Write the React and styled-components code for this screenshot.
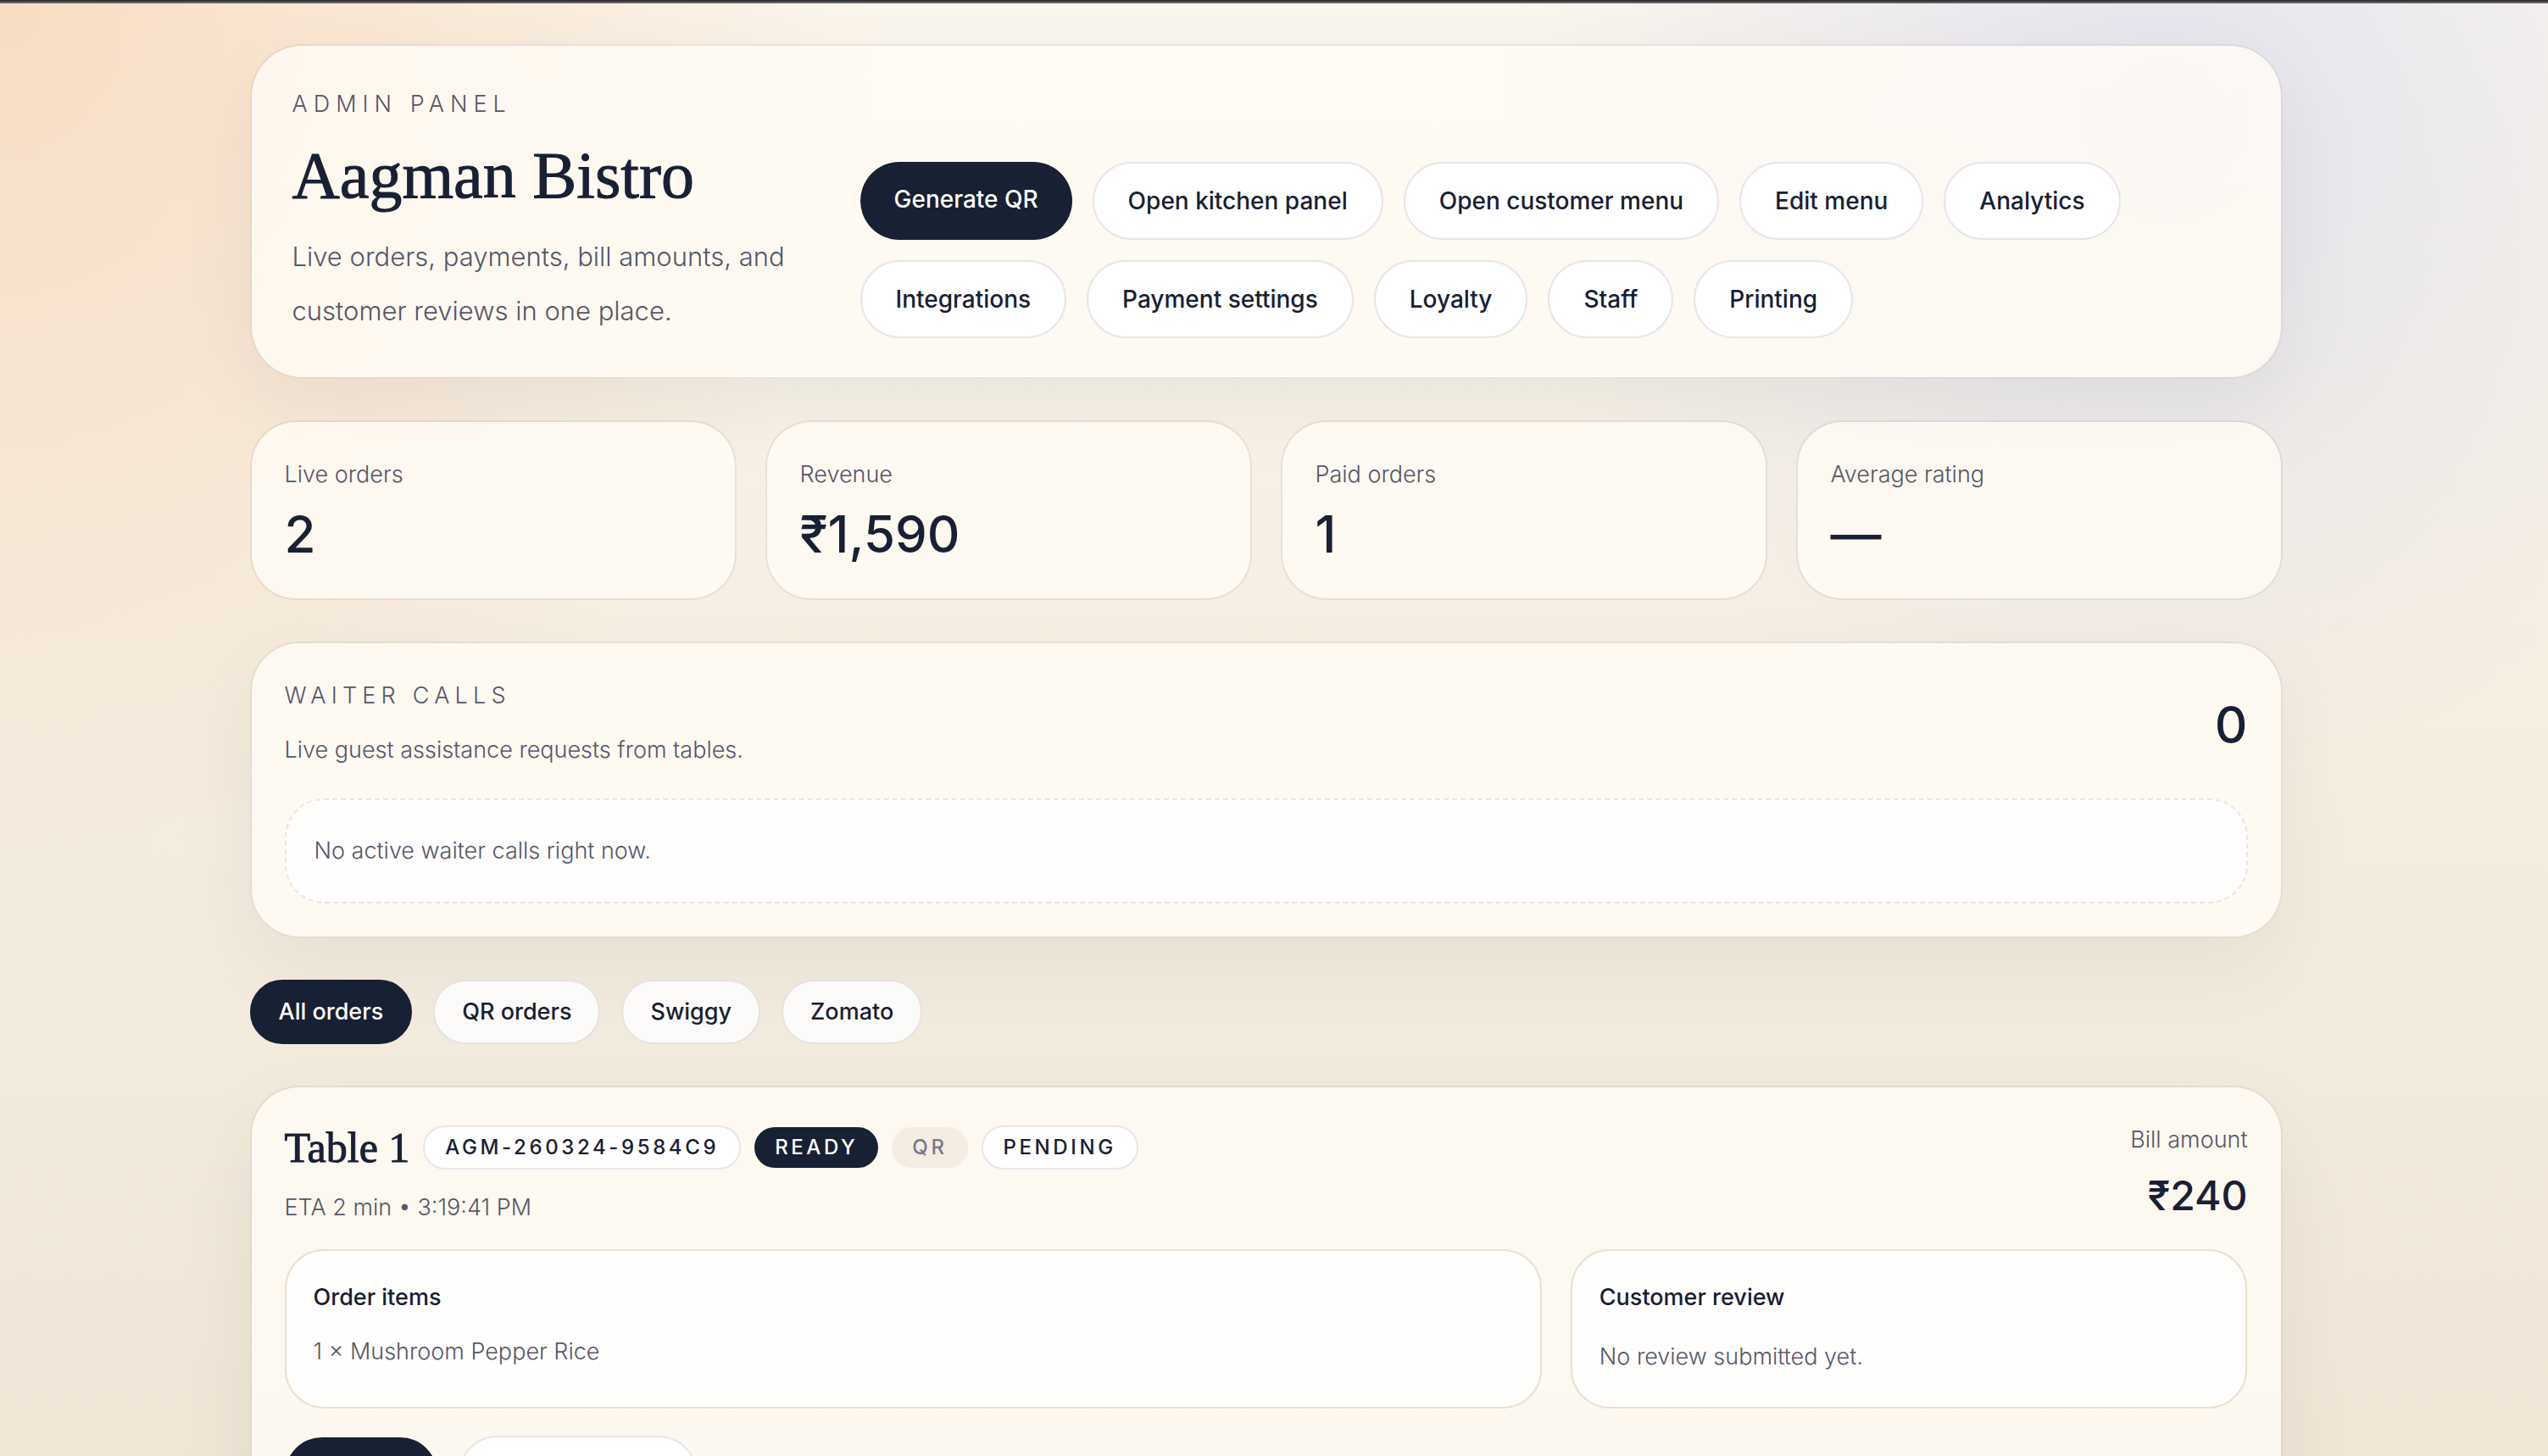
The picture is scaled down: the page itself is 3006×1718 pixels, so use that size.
import React, { useState } from "react";
import styled, { createGlobalStyle } from "styled-components";

const actions = [
  "Open kitchen panel",
  "Open customer menu",
  "Edit menu",
  "Analytics",
  "Integrations",
  "Payment settings",
  "Loyalty",
  "Staff",
  "Printing",
];

const stats = [
  { label: "Live orders", value: "2" },
  { label: "Revenue", value: "₹1,590" },
  { label: "Paid orders", value: "1" },
  { label: "Average rating", value: "—" },
];

const filters = ["All orders", "QR orders", "Swiggy", "Zomato"];

function App() {
  const [filter, setFilter] = useState("All orders");

  return (
    <Page>
      <GlobalStyle />
      <Content>
        <Hero>
          <div>
            <Eyebrow $wide>Admin panel</Eyebrow>
            <Title>Aagman Bistro</Title>
            <Lead>
              Live orders, payments, bill amounts, and customer reviews in one
              place.
            </Lead>
          </div>
          <Actions>
            <PrimaryAction href="#qr">Generate QR</PrimaryAction>
            {actions.map((name) => (
              <Action key={name} href="#panel">
                {name}
              </Action>
            ))}
          </Actions>
        </Hero>

        <Stats>
          {stats.map((stat) => (
            <StatCard key={stat.label}>
              <Muted>{stat.label}</Muted>
              <StatValue>{stat.value}</StatValue>
            </StatCard>
          ))}
        </Stats>

        <Panel>
          <PanelHeader>
            <div>
              <Eyebrow>Waiter calls</Eyebrow>
              <SubText>Live guest assistance requests from tables.</SubText>
            </div>
            <CallCount>0</CallCount>
          </PanelHeader>
          <EmptyBox>No active waiter calls right now.</EmptyBox>
        </Panel>

        <Filters>
          {filters.map((name) => (
            <FilterButton
              key={name}
              $active={name === filter}
              onClick={() => setFilter(name)}
            >
              {name}
            </FilterButton>
          ))}
        </Filters>

        <Panel>
          <OrderHeader>
            <div>
              <OrderTitleRow>
                <OrderTitle>Table 1</OrderTitle>
                <Badge>AGM-260324-9584C9</Badge>
                <Badge $tone="dark">Ready</Badge>
                <Badge $tone="soft">QR</Badge>
                <Badge>Pending</Badge>
              </OrderTitleRow>
              <OrderMeta>ETA 2 min • 3:19:41 PM</OrderMeta>
            </div>
            <Bill>
              <Muted>Bill amount</Muted>
              <BillValue>₹240</BillValue>
            </Bill>
          </OrderHeader>
          <OrderBody>
            <Box>
              <BoxTitle>Order items</BoxTitle>
              <Items>
                <li>1 × Mushroom Pepper Rice</li>
              </Items>
            </Box>
            <Box>
              <BoxTitle>Customer review</BoxTitle>
              <Review>No review submitted yet.</Review>
            </Box>
          </OrderBody>
          <OrderActions>
            <OrderButton $primary aria-label="Mark order served" />
            <OrderButton aria-label="Mark order paid" />
          </OrderActions>
        </Panel>
      </Content>
    </Page>
  );
}

export default App;

const GlobalStyle = createGlobalStyle`
  * {
    box-sizing: border-box;
  }

  body {
    margin: 0;
    font-family: Inter, "Liberation Sans", sans-serif;
    font-size: 27px;
    line-height: 46px;
    color: #182033;
  }

  h1, h2, h3, p, ul {
    margin: 0;
    padding: 0;
    font-weight: 400;
  }
`;

const Page = styled.div`
  height: 100vh;
  overflow: hidden auto;
  scrollbar-width: none;
  padding: 50px 19px 48px 0;
  border-top: 2px solid #353336;
  box-shadow: inset 0 2px #666467;
  background:
    radial-gradient(circle at 0% 0%, rgba(246, 196, 154, 0.5), transparent 30%),
    radial-gradient(circle at 85% 8%, rgba(200, 206, 240, 0.45), transparent 26%),
    linear-gradient(180deg, #fbf6ed 0%, #f5eee1 50%, #efe6d6 100%);
`;

const Content = styled.main`
  display: flex;
  flex-direction: column;
  gap: 49px;
  max-width: 2398px;
  margin: 0 auto;
`;

const Panel = styled.section`
  padding: 39px;
  border: 2px solid rgba(24, 32, 51, 0.07);
  border-radius: 58px;
  background: rgba(255, 250, 243, 0.86);
  background-clip: padding-box;
  box-shadow: 0 34px 96px rgba(24, 32, 51, 0.06);
`;

const Hero = styled(Panel)`
  display: grid;
  grid-template-columns: 622px 1fr;
  gap: 48px;
  align-items: end;
  padding: 46px 48px;
  border-radius: 62px;
`;

const Muted = styled.p`
  color: #555768;
  font-weight: 300;
`;

const Eyebrow = styled(Muted)`
  text-transform: uppercase;
  letter-spacing: ${({ $wide }) => ($wide ? "0.26em" : "0.23em")};
`;

const Title = styled.h1`
  margin: 15px 0 18px;
  font-family: "Liberation Serif", serif;
  font-size: 78px;
  line-height: 92px;
  -webkit-text-stroke: 1px #182033;
`;

const Lead = styled(Muted)`
  font-size: 31px;
  line-height: 64px;
`;

const Actions = styled.nav`
  display: flex;
  flex-wrap: wrap;
  gap: 24px;
`;

const Action = styled.a`
  padding: 21px 40px;
  border: 2px solid #e6e6ea;
  border-radius: 46px;
  background: #fff;
  color: #182033;
  font-size: 28px;
  font-weight: 500;
  text-decoration: none;
`;

const PrimaryAction = styled(Action)`
  border: none;
  background: #182033;
  color: #fff;
`;

const Stats = styled.section`
  display: grid;
  grid-template-columns: repeat(4, 1fr);
  gap: 34px;
`;

const StatCard = styled.div`
  padding: 39px;
  border: 2px solid rgba(24, 32, 51, 0.07);
  border-radius: 54px;
  background: rgba(255, 250, 243, 0.86);
  background-clip: padding-box;
`;

const StatValue = styled.p`
  margin-top: 10px;
  font-size: 60px;
  line-height: 74px;
  font-weight: 500;
`;

const PanelHeader = styled.header`
  display: flex;
  justify-content: space-between;
  align-items: center;
`;

const SubText = styled(Muted)`
  margin-top: 18px;
`;

const CallCount = styled.p`
  padding-top: 4px;
  font-size: 60px;
  line-height: 76px;
  font-weight: 500;
`;

const EmptyBox = styled(Muted)`
  && {
    margin-top: 34px;
  }
  padding: 37px 33px;
  border: 2px dashed #e6e6e4;
  border-radius: 46px;
  background: #fffefd;
`;

const Filters = styled.div`
  display: flex;
  gap: 25px;
`;

const FilterButton = styled.button`
  padding: 13px 32px;
  border: 2px solid ${({ $active }) => ($active ? "#182033" : "#e2e3e2")};
  border-radius: 38px;
  background: ${({ $active }) => ($active ? "#182033" : "#fdfbfa")};
  color: ${({ $active }) => ($active ? "#fff" : "#182033")};
  font: inherit;
  font-weight: 500;
  cursor: pointer;
`;

const OrderHeader = styled.header`
  display: flex;
  justify-content: space-between;
`;

const OrderTitleRow = styled.div`
  display: flex;
  align-items: center;
  gap: 16px;
`;

const OrderTitle = styled.h2`
  font-family: "Liberation Serif", serif;
  font-size: 50px;
  line-height: 64px;
  -webkit-text-stroke: 1px #182033;
`;

const Badge = styled.span`
  padding: 8px 24px;
  border: ${({ $tone }) => ($tone ? "none" : "2px solid #e6e6ea")};
  border-radius: 26px;
  background: ${({ $tone }) =>
    $tone === "dark" ? "#182033" : $tone === "soft" ? "#f4ede3" : "#fff"};
  color: ${({ $tone }) =>
    $tone === "dark" ? "#fff" : $tone === "soft" ? "#777987" : "#182033"};
  font-size: 24px;
  line-height: 32px;
  font-weight: 500;
  letter-spacing: 0.15em;
  text-transform: uppercase;
`;

const OrderMeta = styled(Muted)`
  margin-top: 16px;
`;

const Bill = styled.div`
  text-align: right;
`;

const BillValue = styled.p`
  margin-top: 12px;
  font-size: 48px;
  line-height: 62px;
  font-weight: 500;
`;

const OrderBody = styled.div`
  display: grid;
  grid-template-columns: 1.3fr 0.7fr;
  gap: 34px;
  margin-top: 26px;
`;

const Box = styled.article`
  padding: 32px;
  border: 2px solid #e9e1cf;
  border-radius: 46px;
  background: #fffefd;
`;

const BoxTitle = styled.h3`
  font-size: 27px;
  font-weight: 500;
`;

const Items = styled.ul`
  margin-top: 18px;
  list-style: none;
  color: #555768;
  font-weight: 300;
`;

const Review = styled(Muted)`
  margin-top: 20px;
  line-height: 54px;
`;

const OrderActions = styled.div`
  display: flex;
  align-items: center;
  gap: 25px;
  margin-top: 32px;
`;

const OrderButton = styled.button`
  width: ${({ $primary }) => ($primary ? "180px" : "282px")};
  height: ${({ $primary }) => ($primary ? "88px" : "92px")};
  border: ${({ $primary }) => ($primary ? "none" : "2px solid #e6e6ea")};
  border-radius: 46px;
  background: ${({ $primary }) => ($primary ? "#182033" : "#fff")};
  cursor: pointer;
`;
